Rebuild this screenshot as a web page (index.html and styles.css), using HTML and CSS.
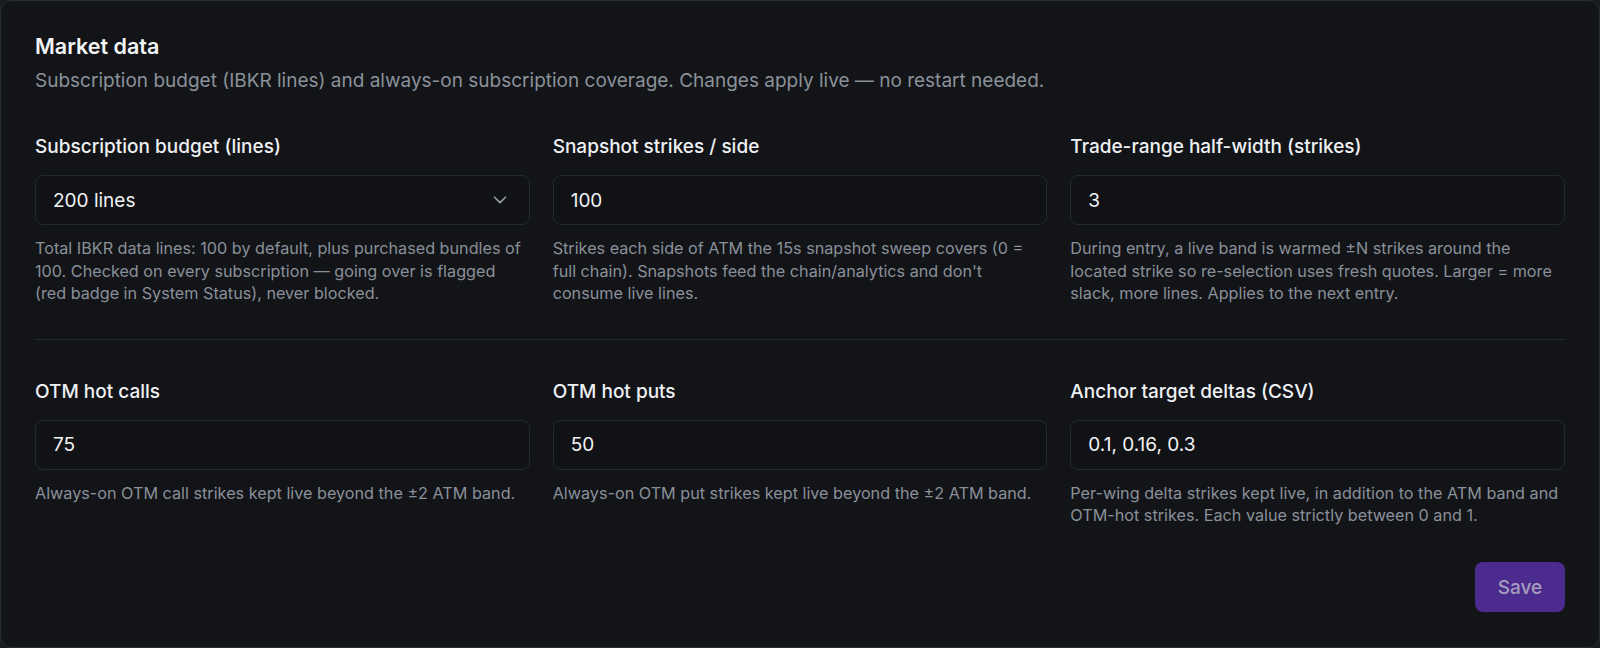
FILE: index.html
```html
<!DOCTYPE html>
<html lang="en">
<head>
<meta charset="utf-8">
<title>Market data</title>
<link rel="stylesheet" href="styles.css">
</head>
<body>
<section class="card">
  <h2 class="title">Market data</h2>
  <p class="subtitle">Subscription budget (IBKR lines) and always-on subscription coverage. Changes apply live — no restart needed.</p>

  <div class="row row-top">
    <div class="field">
      <label class="label">Subscription budget (lines)</label>
      <div class="control select">
        <span class="value">200 lines</span>
        <svg class="chevron" width="14" height="8" viewBox="0 0 14 8" aria-hidden="true"><polyline points="1.5,1.2 7,6.6 12.5,1.2" fill="none" stroke="#9ba0a8" stroke-width="1.6" stroke-linecap="round" stroke-linejoin="round"/></svg>
      </div>
      <p class="help">Total IBKR data lines: 100 by default, plus purchased bundles of 100. Checked on every subscription — going over is flagged (red badge in System Status), never blocked.</p>
    </div>
    <div class="field">
      <label class="label">Snapshot strikes / side</label>
      <input class="control" type="text" value="100">
      <p class="help">Strikes each side of ATM the 15s snapshot sweep covers (0 = full chain). Snapshots feed the chain/analytics and don't consume live lines.</p>
    </div>
    <div class="field">
      <label class="label">Trade-range half-width (strikes)</label>
      <input class="control" type="text" value="3">
      <p class="help">During entry, a live band is warmed ±N strikes around the located strike so re-selection uses fresh quotes. Larger = more slack, more lines. Applies to the next entry.</p>
    </div>
  </div>

  <div class="row row-bottom">
    <div class="field">
      <label class="label">OTM hot calls</label>
      <input class="control" type="text" value="75">
      <p class="help">Always-on OTM call strikes kept live beyond the ±2 ATM band.</p>
    </div>
    <div class="field">
      <label class="label">OTM hot puts</label>
      <input class="control" type="text" value="50">
      <p class="help">Always-on OTM put strikes kept live beyond the ±2 ATM band.</p>
    </div>
    <div class="field">
      <label class="label">Anchor target deltas (CSV)</label>
      <input class="control" type="text" value="0.1, 0.16, 0.3">
      <p class="help">Per-wing delta strikes kept live, in addition to the ATM band and OTM-hot strikes. Each value strictly between 0 and 1.</p>
    </div>
  </div>

  <div class="footer">
    <button class="save" type="button">Save</button>
  </div>
</section>
</body>
</html>
```

FILE: styles.css
```css
* { box-sizing: border-box; }

html, body {
  margin: 0;
  padding: 0;
  background: #1a1c20;
}

body {
  font-family: Inter, "Noto Sans", "Liberation Sans", sans-serif;
  color: #eef0f3;
  width: 1600px;
  height: 648px;
}

.card {
  width: 1600px;
  height: 648px;
  background: #121418;
  border: 1px solid #2a2d33;
  border-radius: 12px;
  padding: 31px 34px 35px 34px;
  display: flex;
  flex-direction: column;
}

.title {
  margin: 0 0 8px 0;
  font-size: 21.5px;
  line-height: 28px;
  font-weight: 600;
  color: #f3f4f6;
}

.subtitle {
  margin: 0;
  font-size: 19px;
  line-height: 26px;
  color: #8b919a;
}

.row {
  display: grid;
  grid-template-columns: repeat(3, 1fr);
  column-gap: 23px;
}

.row-top {
  margin-top: 40px;
  padding-bottom: 34px;
  border-bottom: 1px solid #23262b;
}

.row-bottom {
  padding-top: 39px;
}

.field {
  display: flex;
  flex-direction: column;
  min-width: 0;
}

.label {
  font-size: 19px;
  line-height: 26px;
  font-weight: 500;
  color: #eef0f3;
  margin-bottom: 15px;
}

.control {
  height: 50px;
  width: 100%;
  background: #101216;
  border: 1px solid #25282d;
  border-radius: 8px;
  padding: 0 22px 0 17px;
  font-family: inherit;
  font-size: 19px;
  color: #f2f3f5;
  outline: none;
  margin: 0;
}

.select {
  display: flex;
  align-items: center;
  justify-content: space-between;
}

.select .value {
  line-height: 1;
}

.chevron {
  display: block;
  flex: none;
}

.help {
  margin: 12px 0 0 0;
  font-size: 16.2px;
  line-height: 22.5px;
  color: #8a9099;
}

.footer {
  margin-top: auto;
  display: flex;
  justify-content: flex-end;
}

.save {
  width: 90px;
  height: 50px;
  border: none;
  border-radius: 8px;
  background: #4b2b8e;
  color: #a59ebd;
  font-family: inherit;
  font-size: 19px;
  font-weight: 500;
  cursor: default;
}
```
